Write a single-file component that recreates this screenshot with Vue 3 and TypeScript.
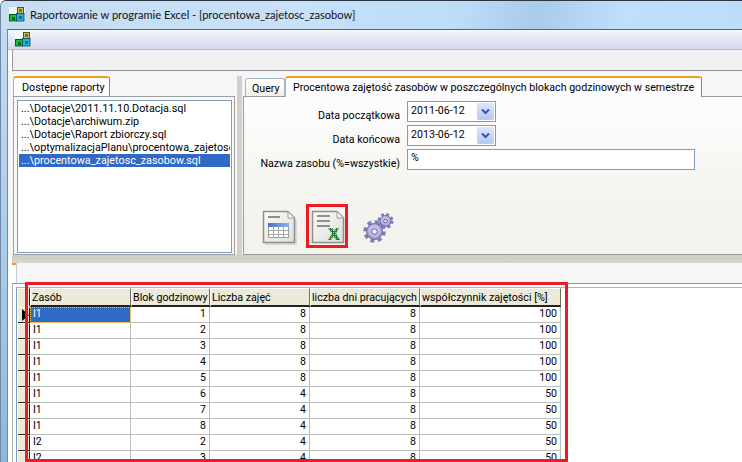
<script setup lang="ts">
const reports = [
  '...\\Dotacje\\2011.11.10.Dotacja.sql',
  '...\\Dotacje\\archiwum.zip',
  '...\\Dotacje\\Raport zbiorczy.sql',
  '...\\optymalizacjaPlanu\\procentowa_zajetosc',
  '...\\procentowa_zajetosc_zasobow.sql',
]
const columns = ['Zasób', 'Blok godzinowy', 'Liczba zajęć', 'liczba dni pracujących', 'współczynnik zajętości [%]']
const rows: [string, number, number, number, number][] = [
  ['I1', 1, 8, 8, 100],
  ['I1', 2, 8, 8, 100],
  ['I1', 3, 8, 8, 100],
  ['I1', 4, 8, 8, 100],
  ['I1', 5, 8, 8, 100],
  ['I1', 6, 4, 8, 50],
  ['I1', 7, 4, 8, 50],
  ['I1', 8, 4, 8, 50],
  ['I2', 2, 4, 8, 50],
  ['I2', 3, 4, 8, 50],
]
</script>

<template>
  <div class="window">
    <div class="titlebar">
      <svg class="appicon" width="16" height="16" viewBox="0 0 16 16">
        <rect width="16" height="15" fill="#fff" opacity="0.7" />
        <rect x="8.500" y="0.500" width="6" height="7" fill="#c9bf5a" stroke="#55501c" />
        <rect x="0.500" y="7.500" width="7" height="6.500" fill="#19c22c" stroke="#0b5a14" />
        <rect x="7.500" y="6.500" width="7.500" height="7.500" fill="#2ab4d4" stroke="#0f5a70" />
        <rect x="3" y="10" width="3" height="3" fill="#064" />
        <rect x="10" y="9" width="3" height="3" fill="#0b6f8c" />
        <rect x="10" y="2" width="3" height="3" fill="#7c7228" />
      </svg>
      <span class="title">Raportowanie w programie Excel - [procentowa_zajetosc_zasobow]</span>
    </div>
    <div class="client">
      <div class="menubar">
        <svg width="16" height="16" viewBox="0 0 16 16">
          <rect width="16" height="15" fill="#fff" opacity="0.7" />
          <rect x="8.500" y="0.500" width="6" height="7" fill="#c9bf5a" stroke="#55501c" />
          <rect x="0.500" y="7.500" width="7" height="6.500" fill="#19c22c" stroke="#0b5a14" />
          <rect x="7.500" y="6.500" width="7.500" height="7.500" fill="#2ab4d4" stroke="#0f5a70" />
          <rect x="3" y="10" width="3" height="3" fill="#064" />
          <rect x="10" y="9" width="3" height="3" fill="#0b6f8c" />
          <rect x="10" y="2" width="3" height="3" fill="#7c7228" />
        </svg>
      </div>
      <div class="toolbar"></div>
      <div class="upper">
        <div class="leftpanel">
          <div class="tabstrip">
            <div class="tab active">Dostępne raporty</div>
          </div>
          <div class="leftpage">
            <div class="listbox">
              <div v-for="(r, i) in reports" :key="r" class="item" :class="{ selected: i === 4 }">{{ r }}</div>
            </div>
          </div>
        </div>
        <div class="vsplit"></div>
        <div class="rightpanel">
          <div class="tabstrip righttabs">
            <div class="tab query">Query</div>
            <div class="tab active">Procentowa zajętość zasobów w poszczególnych blokach godzinowych w semestrze</div>
          </div>
          <div class="page">
            <div class="form">
              <label class="lbl">Data początkowa</label>
              <div class="combo"><span>2011-06-12</span><i class="drop"><svg width="9" height="7" viewBox="0 0 9 7"><path d="M1 1.500 4.500 5 8 1.500" fill="none" stroke="#2f5a9e" stroke-width="2" /></svg></i></div>
              <label class="lbl">Data końcowa</label>
              <div class="combo"><span>2013-06-12</span><i class="drop"><svg width="9" height="7" viewBox="0 0 9 7"><path d="M1 1.500 4.500 5 8 1.500" fill="none" stroke="#2f5a9e" stroke-width="2" /></svg></i></div>
              <label class="lbl">Nazwa zasobu (%=wszystkie)</label>
              <div class="input">%</div>
            </div>
            <div class="actions">
              <svg class="act" width="36" height="36" viewBox="0 0 36 36">
                <defs>
                  <linearGradient id="docfill" x1="0" y1="0" x2="1" y2="1">
                    <stop offset="0" stop-color="#fafaf8" />
                    <stop offset="1" stop-color="#dededa" />
                  </linearGradient>
                  <linearGradient id="tblhead" x1="0" y1="0" x2="1" y2="0">
                    <stop offset="0" stop-color="#4f70c0" />
                    <stop offset="1" stop-color="#86b8e6" />
                  </linearGradient>
                  <pattern id="dither" width="2" height="2" patternUnits="userSpaceOnUse">
                    <rect width="2" height="2" fill="#1f7a33" />
                    <rect width="1" height="1" fill="#9cd0a4" />
                  </pattern>
                  <radialGradient id="gearfill" cx="0.5" cy="0.45" r="0.6">
                    <stop offset="0" stop-color="#e4e4f8" />
                    <stop offset="0.6" stop-color="#b4b4e2" />
                    <stop offset="1" stop-color="#7878b4" />
                  </radialGradient>
                </defs>
                <path d="M3 34H34V10" fill="none" stroke="#dcdcd6" stroke-width="2" />
                <path d="M1.500 1.500H26L32.500 8V32.500H1.500Z" fill="url(#docfill)" stroke="#8f8f8f" stroke-width="1.500" />
                <path d="M26 1.500V8H32.500Z" fill="#fff" stroke="#9a9a9a" />
                <rect x="6" y="6" width="12" height="2" fill="#8f8f8f" />
                <rect x="6.500" y="13.500" width="20" height="14" fill="#fff" stroke="#9c9c9c" />
                <rect x="6" y="13" width="21" height="4" fill="url(#tblhead)" />
                <path d="M7 20.500H26M7 24.500H26M11.500 17V27M16.500 17V27M21.500 17V27" stroke="#a8a8a8" />
              </svg>
              <svg class="act-wrap" width="36" height="36" viewBox="0 0 36 36">
                <path d="M1.500 1.500H26L32.500 8V32.500H1.500Z" fill="url(#docfill)" stroke="#8f8f8f" stroke-width="1.500" />
                <path d="M26 1.500V8H32.500Z" fill="#fff" stroke="#9a9a9a" />
                <path d="M6 6H19M6 11H19M6 16H19" stroke="#8f8f8f" stroke-width="2" />
                <path d="M17 18H21L23 21L25 18H28L25 23.500L29 30H25L22.500 26L20 30H17L21 23.500Z" fill="url(#dither)" />
              </svg>
              <svg class="gears" width="32" height="32" viewBox="0 0 32 32">
                <circle cx="22.500" cy="9" r="6.500" fill="none" stroke="#7c7cba" stroke-width="3" stroke-dasharray="2.800 2.300" />
                <circle cx="22.500" cy="9" r="5.500" fill="url(#gearfill)" stroke="#6a6aa2" />
                <circle cx="22.500" cy="9" r="1.800" fill="#f0f0fc" stroke="#55558c" />
                <circle cx="11.500" cy="19.500" r="9.500" fill="none" stroke="#7c7cba" stroke-width="3.500" stroke-dasharray="4 3.460" />
                <circle cx="11.500" cy="19.500" r="8" fill="url(#gearfill)" stroke="#6a6aa2" />
                <circle cx="11.500" cy="19.500" r="2.800" fill="#f0f0fc" stroke="#55558c" />
              </svg>
            </div>
          </div>
        </div>
      </div>
      <div class="hsplit"></div>
      <div class="lower">
        <div class="lowertabs"><b class="mark"></b></div>
        <div class="gridframe">
          <div class="gridinner">
            <div class="grid">
              <div class="cell rowhead top"></div>
              <div v-for="c in columns" :key="c" class="cell head">{{ c }}</div>
              <template v-for="(r, i) in rows" :key="i">
                <div class="cell rowhead">
                  <svg v-if="i === 0" width="7" height="12" viewBox="0 0 7 12"><path d="M0 0 7 6 0 12Z" fill="#000" /></svg>
                </div>
                <div class="cell body" :class="{ current: i === 0 }">{{ r[0] }}</div>
                <div class="cell body num">{{ r[1] }}</div>
                <div class="cell body num">{{ r[2] }}</div>
                <div class="cell body num">{{ r[3] }}</div>
                <div class="cell body num">{{ r[4] }}</div>
              </template>
            </div>
          </div>
        </div>
      </div>
    </div>
    <div class="redbox small"></div>
    <div class="redbox big"></div>
  </div>
</template>

<style>
html, body { margin: 0; background: #fff; }
</style>

<style scoped>
.window {
  position: relative;
  width: 742px;
  height: 462px;
  overflow: hidden;
  display: flex;
  flex-direction: column;
  font-family: Roboto, "Liberation Sans", Arial, sans-serif;
  font-size: 10.800px;
  color: #000;
  background: linear-gradient(180deg, #c4def5 0%, #a9c9e8 60%, #8fb6dd 100%);
  border-top: 1px solid #2a3644;
  border-left: 1px solid #6f88a4;
  box-sizing: border-box;
  border-radius: 6px 0 0 0;
}
.titlebar {
  height: 28px;
  flex: none;
  display: flex;
  align-items: center;
  padding: 0 0 1px 8px;
  gap: 5px;
  box-sizing: border-box;
  background: linear-gradient(100deg, #c6ddf2 0%, #c7e1f8 40%, #bcdcf8 62%, #a9cbea 72%, #bfdffc 84%, #bddcf8 100%);
}
.title { font-family: Lato, Roboto, sans-serif; font-size: 11.100px; color: #111; white-space: nowrap; }
.appicon { flex: none; }
.client {
  flex: 1;
  margin-left: 6px;
  display: flex;
  flex-direction: column;
  min-height: 0;
  border-top: 1px solid #5b6670;
  border-left: 1px solid #7c8894;
  background: #fff;
}
.menubar {
  height: 19px;
  flex: none;
  display: flex;
  align-items: center;
  padding-left: 7px;
  background: linear-gradient(180deg, #f7f8fb 0%, #eceef6 25%, #d4d9eb 100%);
  border-bottom: 1px solid #b4b9d0;
}
.toolbar {
  height: 20px;
  flex: none;
  margin-left: 4px;
  background: #f0f0f0;
  border-left: 1px solid #9a9a9a;
  border-bottom: 1px solid #8d8d96;
}
.upper {
  height: 184px;
  flex: none;
  display: flex;
  padding: 5px 0 0 5px;
  background: #f6f6f6;
  box-sizing: border-box;
}
.leftpanel { width: 222px; flex: none; display: flex; flex-direction: column; }
.vsplit { width: 5px; flex: none; margin-left: 2px; background: #d4d0c8; }
.rightpanel { flex: 1; display: flex; flex-direction: column; min-width: 0; margin-left: 1px; font-size: 10.650px; }
.tabstrip { display: flex; align-items: flex-end; height: 20px; flex: none; }
.righttabs { padding-left: 2px; position: relative; z-index: 1; }
.tab {
  box-sizing: border-box;
  white-space: nowrap;
  background: linear-gradient(180deg, #fff, #f2f2ec);
}
.tab.active {
  height: 21px;
  line-height: 19px;
  padding: 0 7px;
  margin-bottom: -1px;
  border-top: 2px solid #f0a020;
  border-left: 1px solid #9fb6cc;
  border-right: 1px solid #8a8a8a;
  border-radius: 3px 3px 0 0;
  background: #fcfcfe;
}
.leftpanel .tab.active { padding: 0 8px; width: 97px; }
.tab.query {
  width: 40px;
  height: 18px;
  line-height: 19px;
  padding-left: 6px;
  border: 1px solid #9fb6cc;
  border-bottom: none;
  border-radius: 3px 3px 0 0;
}
.leftpage {
  flex: 1;
  background: #f7f7f4;
  border: 1px solid #a0a0a8;
  padding: 3px 2px 1px 3px;
  display: flex;
  min-height: 0;
}
.listbox {
  flex: 1;
  min-width: 0;
  background: #fff;
  border: 1px solid #7f9db9;
  padding: 1px;
}
.item {
  height: 13px;
  line-height: 13px;
  padding-left: 2px;
  white-space: nowrap;
  overflow: hidden;
  color: #000;
}
.item.selected { background: #316ac5; color: #fff; }
.page {
  flex: 1;
  border-left: 1px solid #9a9a9a;
  border-top: 1px solid #9a9a9a;
  border-bottom: 1px solid #9a9a9a;
  background: linear-gradient(180deg, #fdfdff 0%, #f5f4ef 60%, #f2f1ea 100%);
  display: flex;
  flex-direction: column;
  padding-top: 4px;
  min-height: 0;
}
.form {
  display: grid;
  grid-template-columns: 156px auto;
  grid-auto-rows: 21px;
  row-gap: 3px;
  column-gap: 7px;
  justify-content: start;
  align-items: center;
}
.lbl { text-align: right; white-space: nowrap; padding-top: 8px; line-height: 13px; }
.combo {
  width: 89px;
  height: 21px;
  box-sizing: border-box;
  border: 1px solid #7f9db9;
  background: #fff;
  display: flex;
  justify-content: space-between;
  padding-left: 3px;
  line-height: 18px;
}
.drop {
  width: 17px;
  height: 17px;
  margin: 1px;
  display: flex;
  align-items: center;
  justify-content: center;
  background: linear-gradient(180deg, #dbe6fb, #b4c8f2);
  border-radius: 2px;
}
.input {
  width: 288px;
  height: 21px;
  box-sizing: border-box;
  border: 1px solid #7f9db9;
  background: #fff;
  padding-left: 3px;
  line-height: 16px;
}
.actions {
  display: flex;
  align-items: flex-start;
  margin: 40px 0 0 18px;
}
.act-wrap { margin-left: 13px; }
.gears { margin-left: 16px; margin-top: 2px; }
.hsplit { height: 8px; flex: none; margin-left: 4px; background: linear-gradient(180deg, #cfccc0, #d9d6cc); }
.lower { flex: 1; min-height: 0; display: flex; flex-direction: column; margin-left: 4px; background: #fff; }
.lowertabs {
  height: 20px;
  flex: none;
  margin-left: 4px;
  border-left: 1px solid #c8d0d8;
  background: #f6f6f6;
  position: relative;
}
.mark { position: absolute; left: -5px; top: 0; width: 4px; height: 2px; background: #f0a020; }
.gridframe {
  flex: 1;
  min-height: 0;
  overflow: hidden;
  border-top: 1px solid #8898a8;
  border-left: 1px solid #a8b4c0;
  padding-top: 3px;
  padding-left: 3px;
  box-sizing: border-box;
}
.gridinner {
  border-top: 1px solid #a8b8c8;
  border-left: 1px solid #7f9db9;
  padding-left: 1px;
  height: 200px;
}
.grid {
  display: grid;
  grid-template-columns: 12px 101px 79px 100px 110px 141px;
  grid-template-rows: 19px;
  grid-auto-rows: 16px;
  width: max-content;
  font-size: 10.500px;
}
.cell { box-sizing: border-box; overflow: hidden; white-space: nowrap; line-height: 14px; }
.head {
  background: #ece9d8;
  border-top: 1px solid #fff;
  border-left: 1px solid #fff;
  border-right: 1px solid #6c6c60;
  border-bottom: 2px solid #222;
  padding-left: 1px;
  line-height: 18px;
  font-size: 10.700px;
}
.rowhead {
  background: #ece9d8;
  border-top: 1px solid #fff;
  border-bottom: 1px solid #222;
  border-right: 1px solid #222;
  display: flex;
  align-items: center;
  justify-content: flex-end;
}
.rowhead.top { border-bottom: 2px solid #ece9d8; }
.body {
  background: #fff;
  border-right: 1px solid #bcbcbc;
  border-bottom: 1px solid #bcbcbc;
  padding: 0 3px;
}
.num { text-align: right; }
.current {
  background: #316ac5;
  color: #fff;
  outline: 1px dotted #e8c060;
  outline-offset: -1px;
}
.redbox {
  position: absolute;
  box-sizing: border-box;
  border: 3px solid #ed1c24;
  pointer-events: none;
}
.redbox.small { left: 305px; top: 203px; width: 42px; height: 44px; }
.redbox.big { left: 24px; top: 281px; width: 543px; height: 180px; }
</style>
